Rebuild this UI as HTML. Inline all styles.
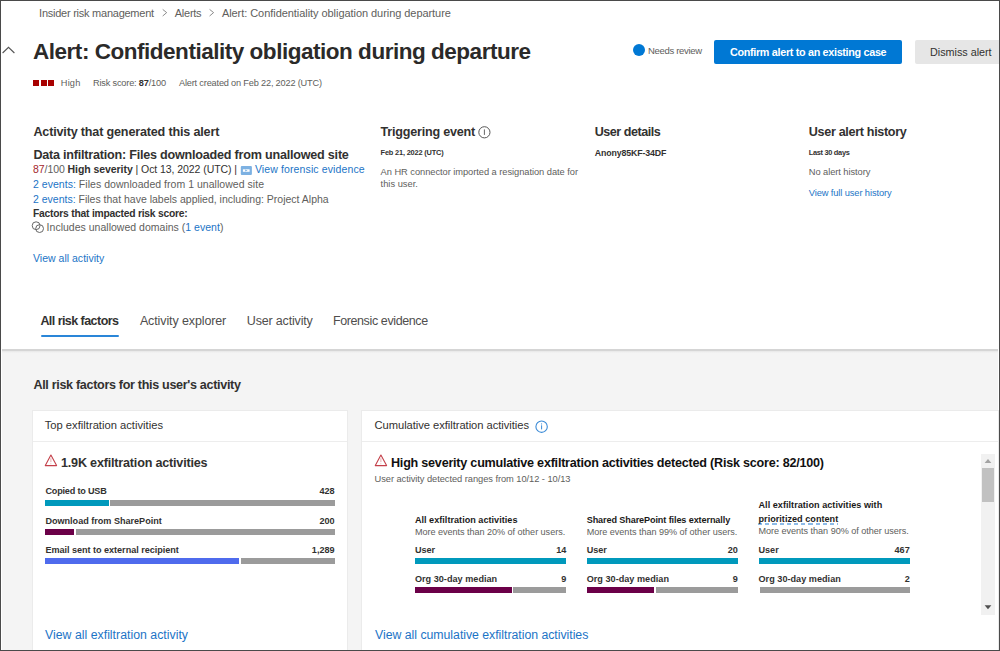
<!DOCTYPE html>
<html><head><meta charset="utf-8"><title>Alert: Confidentiality obligation during departure</title>
<style>
html,body{margin:0;padding:0;}
body{width:1000px;height:651px;position:relative;overflow:hidden;background:#ffffff;font-family:"Liberation Sans",sans-serif;}
.t{position:absolute;white-space:nowrap;}
.t b{font-weight:700;}
.abs{position:absolute;}
.frame{position:absolute;left:0;top:0;width:998px;height:649px;border:1px solid #4a4a4a;}
.graybg{position:absolute;left:2px;top:349px;width:996px;height:301px;background:#f4f4f4;}
.shadow{position:absolute;left:2px;top:349px;width:996px;height:5px;background:linear-gradient(#d5d5d5 0,#d5d5d5 1.5px,#eaeaea 2.5px,#f4f4f4 4px);}
.card{position:absolute;background:#ffffff;box-shadow:0 0 0 1px #ebebeb;}
.hdiv{position:absolute;height:1px;background:#ededed;}
.bar{position:absolute;height:6px;}

</style></head><body>
<div class="graybg"></div>
<div class="shadow"></div>
<!-- up chevron -->
<svg class="abs" style="left:0;top:40px" width="20" height="16"><polyline points="2.6,13 8.5,7.3 14.4,13" fill="none" stroke="#555" stroke-width="1.1"/></svg>
<!-- breadcrumb chevrons -->
<svg class="abs" style="left:158px;top:6px" width="60" height="14"><polyline points="4.7,3.4 8.7,6.6 4.7,10" fill="none" stroke="#808080" stroke-width="0.9"/><polyline points="51.6,3.4 55.6,6.6 51.6,10" fill="none" stroke="#808080" stroke-width="0.9"/></svg>
<!-- severity squares -->
<div class="abs" style="left:33px;top:80px;width:6px;height:6px;background:#a80000"></div>
<div class="abs" style="left:40.5px;top:80px;width:6px;height:6px;background:#a80000"></div>
<div class="abs" style="left:48.2px;top:80px;width:6px;height:6px;background:#a80000"></div>
<!-- needs review dot -->
<div class="abs" style="left:633.3px;top:43.6px;width:12px;height:12px;border-radius:50%;background:#0078d4"></div>
<!-- buttons -->
<div class="abs" style="left:714px;top:40px;width:188px;height:24px;background:#0078d4;border-radius:2px"></div>
<div class="abs" style="left:915px;top:40px;width:84px;height:24px;background:#e6e6e6;border-radius:2px 0 0 2px"></div>
<!-- forensic icon -->
<svg class="abs" style="left:240px;top:165px" width="13" height="11"><rect x="0.8" y="1" width="11.1" height="8.9" rx="1" fill="#7db1e2"/><rect x="2.9" y="4.3" width="6.7" height="2.5" fill="#fff"/><path d="M5.2 4.6 L7.6 5.55 L5.2 6.5Z" fill="#7db1e2"/></svg>
<!-- domain icon -->
<svg class="abs" style="left:30px;top:218.7px" width="16" height="16"><circle cx="6.1" cy="6.7" r="3.9" fill="none" stroke="#666" stroke-width="1"/><circle cx="9.6" cy="9.6" r="3.9" fill="none" stroke="#666" stroke-width="1"/></svg>
<!-- info icon triggering -->
<svg class="abs" style="left:476px;top:124px" width="18" height="18"><circle cx="8.4" cy="8.3" r="5.6" fill="none" stroke="#555" stroke-width="1"/><line x1="8.4" y1="5.4" x2="8.4" y2="10.9" stroke="#555" stroke-width="0.9"/></svg>
<!-- tab underline -->
<div class="abs" style="left:40.8px;top:335px;width:78.2px;height:2px;background:#2a86d8;border-radius:1px"></div>
<!-- cards -->
<div class="card" style="left:33px;top:411px;width:314px;height:240px"></div>
<div class="hdiv" style="left:33px;top:441px;width:314px"></div>
<div class="card" style="left:362px;top:411px;width:636px;height:240px"></div>
<div class="hdiv" style="left:362px;top:441px;width:636px"></div>
<!-- warning icons -->
<svg class="abs" style="left:43px;top:452px" width="16" height="16"><path d="M7.9 3.1 L13.6 13.6 L2.3 13.6 Z" fill="none" stroke="#c4404a" stroke-width="1.1" stroke-linejoin="round"/><line x1="7.9" y1="6.2" x2="7.9" y2="10.2" stroke="#e2a3a6" stroke-width="0.9"/><circle cx="7.9" cy="11.7" r="0.5" fill="#e2a3a6"/></svg>
<svg class="abs" style="left:372.6px;top:452px" width="16" height="16"><path d="M7.9 3.1 L13.6 13.6 L2.3 13.6 Z" fill="none" stroke="#c4404a" stroke-width="1.1" stroke-linejoin="round"/><line x1="7.9" y1="6.2" x2="7.9" y2="10.2" stroke="#e2a3a6" stroke-width="0.9"/><circle cx="7.9" cy="11.7" r="0.5" fill="#e2a3a6"/></svg>
<!-- info icon blue -->
<svg class="abs" style="left:532px;top:417px" width="18" height="18"><circle cx="9.6" cy="9.7" r="5.7" fill="none" stroke="#3a8ad6" stroke-width="1.1"/><line x1="9.6" y1="8.3" x2="9.6" y2="12.4" stroke="#3a8ad6" stroke-width="1"/><circle cx="9.6" cy="6.9" r="0.55" fill="#3a8ad6"/></svg>
<!-- card1 bars -->
<div class="bar" style="left:45.2px;top:500px;width:63.4px;background:#0099bc"></div>
<div class="bar" style="left:110.2px;top:500px;width:224.4px;background:#9b9b9b"></div>
<div class="bar" style="left:45.2px;top:529px;width:28.8px;background:#6b0048"></div>
<div class="bar" style="left:76px;top:529px;width:258.6px;background:#9b9b9b"></div>
<div class="bar" style="left:45.2px;top:558.4px;width:193.8px;background:#4f6bed"></div>
<div class="bar" style="left:240.9px;top:558.4px;width:93.7px;background:#9b9b9b"></div>
<!-- card2 bars -->
<div class="bar" style="left:415px;top:558px;width:151.4px;background:#0099bc"></div>
<div class="bar" style="left:415px;top:587.4px;width:96.6px;background:#6b0048"></div>
<div class="bar" style="left:513px;top:587.4px;width:53.4px;background:#9b9b9b"></div>
<div class="bar" style="left:587px;top:558px;width:150.9px;background:#0099bc"></div>
<div class="bar" style="left:587px;top:587.4px;width:66.8px;background:#6b0048"></div>
<div class="bar" style="left:656px;top:587.4px;width:81.9px;background:#9b9b9b"></div>
<div class="bar" style="left:759px;top:558px;width:150.7px;background:#0099bc"></div>
<div class="bar" style="left:760.3px;top:587.2px;width:149.4px;background:#9b9b9b"></div>
<!-- scrollbar -->
<div class="abs" style="left:981px;top:454px;width:14px;height:161px;background:#f1f1f1"></div>
<div class="abs" style="left:982px;top:468px;width:12px;height:34px;background:#c1c1c1"></div>
<svg class="abs" style="left:981px;top:454px" width="14" height="161"><path d="M3.6 9 L7 5 L10.4 9Z" fill="#a3a3a3"/><path d="M3.6 151.3 L7 155.2 L10.4 151.3Z" fill="#505050"/></svg>
<div class="frame"></div>
<div class="abs" style="left:758.3px;top:523.3px;width:80px;height:1.6px;background:repeating-linear-gradient(90deg,#8dbbe8 0 4.2px,transparent 4.2px 7.2px)"></div>

<div class="t" id="bc1" style="top:7.85px;font-size:11px;line-height:11px;font-weight:400;color:#605e5c;left:39.10px;letter-spacing:-0.248px;">Insider risk management</div>
<div class="t" id="bc2" style="top:7.85px;font-size:11px;line-height:11px;font-weight:400;color:#605e5c;left:174.80px;letter-spacing:-0.265px;">Alerts</div>
<div class="t" id="bc3" style="top:7.85px;font-size:11px;line-height:11px;font-weight:400;color:#605e5c;left:221.90px;letter-spacing:-0.056px;">Alert: Confidentiality obligation during departure</div>
<div class="t" id="title" style="top:40.86px;font-size:22.5px;line-height:22.5px;font-weight:700;color:#2b2a29;left:33.00px;letter-spacing:-0.474px;">Alert: Confidentiality obligation during departure</div>
<div class="t" id="m1" style="top:78.85px;font-size:9.2px;line-height:9.2px;font-weight:400;color:#605e5c;left:60.80px;letter-spacing:0.199px;">High</div>
<div class="t" id="m2" style="top:78.85px;font-size:9.2px;line-height:9.2px;font-weight:400;color:#605e5c;left:93.00px;letter-spacing:-0.183px;">Risk score: <b style="color:#323130">87</b>/100</div>
<div class="t" id="m3" style="top:78.85px;font-size:9.2px;line-height:9.2px;font-weight:400;color:#605e5c;left:179.00px;letter-spacing:-0.180px;">Alert created on Feb 22, 2022 (UTC)</div>
<div class="t" id="nr" style="top:45.85px;font-size:9.5px;line-height:9.5px;font-weight:400;color:#605e5c;left:648.00px;letter-spacing:-0.324px;">Needs review</div>
<div class="t" id="btn1" style="top:46.85px;font-size:10.8px;line-height:10.8px;font-weight:700;color:#ffffff;left:730.00px;letter-spacing:-0.319px;">Confirm alert to an existing case</div>
<div class="t" id="btn2" style="top:46.85px;font-size:10.8px;line-height:10.8px;font-weight:400;color:#323130;left:930.00px;letter-spacing:-0.017px;">Dismiss alert</div>
<div class="t" id="a1" style="top:125.85px;font-size:12.6px;line-height:12.6px;font-weight:700;color:#323130;left:33.40px;letter-spacing:-0.175px;">Activity that generated this alert</div>
<div class="t" id="a2" style="top:148.85px;font-size:12.6px;line-height:12.6px;font-weight:700;color:#323130;left:33.40px;letter-spacing:-0.222px;">Data infiltration: Files downloaded from unallowed site</div>
<div class="t" id="a3" style="top:163.85px;font-size:10.5px;line-height:10.5px;font-weight:400;color:#605e5c;left:33.00px;letter-spacing:-0.067px;"><span style="color:#a4262c">87</span>/100 <b style="color:#323130">High severity</b> <span style="color:#323130">| Oct 13, 2022 (UTC) |</span></div>
<div class="t" id="a3b" style="top:163.85px;font-size:10.5px;line-height:10.5px;font-weight:400;color:#1b74c6;left:254.90px;letter-spacing:0.123px;">View forensic evidence</div>
<div class="t" id="a4" style="top:178.85px;font-size:10.5px;line-height:10.5px;font-weight:400;color:#605e5c;left:33.00px;letter-spacing:0.034px;"><span style="color:#1b74c6">2 events:</span> Files downloaded from 1 unallowed site</div>
<div class="t" id="a5" style="top:193.85px;font-size:10.5px;line-height:10.5px;font-weight:400;color:#605e5c;left:33.00px;letter-spacing:-0.004px;"><span style="color:#1b74c6">2 events:</span> Files that have labels applied, including: Project Alpha</div>
<div class="t" id="a6" style="top:208.86px;font-size:10.3px;line-height:10.3px;font-weight:700;color:#323130;left:33.00px;letter-spacing:-0.224px;">Factors that impacted risk score:</div>
<div class="t" id="a7" style="top:221.85px;font-size:10.5px;line-height:10.5px;font-weight:400;color:#605e5c;left:46.60px;letter-spacing:0.014px;">Includes unallowed domains (<span style="color:#1b74c6">1 event</span>)</div>
<div class="t" id="a8" style="top:252.85px;font-size:10.5px;line-height:10.5px;font-weight:400;color:#1b74c6;left:33.00px;letter-spacing:0.012px;">View all activity</div>
<div class="t" id="tr1" style="top:125.85px;font-size:12.6px;line-height:12.6px;font-weight:700;color:#323130;left:380.60px;letter-spacing:-0.225px;">Triggering event</div>
<div class="t" id="tr2" style="top:148.86px;font-size:7.4px;line-height:7.4px;font-weight:700;color:#323130;left:380.60px;letter-spacing:-0.184px;">Feb 21, 2022 (UTC)</div>
<div class="t" id="tr3" style="top:167.85px;font-size:9.3px;line-height:9.3px;font-weight:400;color:#605e5c;left:380.60px;letter-spacing:-0.045px;">An HR connector imported a resignation date for</div>
<div class="t" id="tr4" style="top:179.85px;font-size:9.3px;line-height:9.3px;font-weight:400;color:#605e5c;left:380.60px;">this user.</div>
<div class="t" id="ud1" style="top:125.85px;font-size:12.6px;line-height:12.6px;font-weight:700;color:#323130;left:594.70px;letter-spacing:-0.492px;">User details</div>
<div class="t" id="ud2" style="top:148.85px;font-size:8.8px;line-height:8.8px;font-weight:700;color:#323130;left:594.70px;letter-spacing:-0.125px;">Anony85KF-34DF</div>
<div class="t" id="uh1" style="top:125.85px;font-size:12.6px;line-height:12.6px;font-weight:700;color:#323130;left:808.80px;letter-spacing:-0.329px;">User alert history</div>
<div class="t" id="uh2" style="top:148.86px;font-size:7.4px;line-height:7.4px;font-weight:700;color:#323130;left:808.80px;letter-spacing:-0.306px;">Last 30 days</div>
<div class="t" id="uh3" style="top:167.85px;font-size:9.3px;line-height:9.3px;font-weight:400;color:#605e5c;left:808.80px;letter-spacing:-0.062px;">No alert history</div>
<div class="t" id="uh4" style="top:188.85px;font-size:9.3px;line-height:9.3px;font-weight:400;color:#1b74c6;left:808.80px;letter-spacing:-0.109px;">View full user history</div>
<div class="t" id="tab1" style="top:314.86px;font-size:12.5px;line-height:12.5px;font-weight:700;color:#323130;left:40.40px;letter-spacing:-0.550px;">All risk factors</div>
<div class="t" id="tab2" style="top:314.86px;font-size:12.5px;line-height:12.5px;font-weight:400;color:#4f4e4d;left:139.90px;letter-spacing:-0.114px;">Activity explorer</div>
<div class="t" id="tab3" style="top:314.86px;font-size:12.5px;line-height:12.5px;font-weight:400;color:#4f4e4d;left:246.80px;letter-spacing:-0.173px;">User activity</div>
<div class="t" id="tab4" style="top:314.86px;font-size:12.5px;line-height:12.5px;font-weight:400;color:#4f4e4d;left:332.90px;letter-spacing:-0.384px;">Forensic evidence</div>
<div class="t" id="g1" style="top:378.85px;font-size:12.6px;line-height:12.6px;font-weight:700;color:#323130;left:33.40px;letter-spacing:-0.327px;">All risk factors for this user's activity</div>
<div class="t" id="c1h" style="top:419.85px;font-size:11.2px;line-height:11.2px;font-weight:400;color:#323130;left:44.70px;letter-spacing:0.006px;">Top exfiltration activities</div>
<div class="t" id="c1t" style="top:456.85px;font-size:12.6px;line-height:12.6px;font-weight:700;color:#323130;left:61.00px;letter-spacing:-0.196px;">1.9K exfiltration activities</div>
<div class="t" id="c1l428" style="top:486.85px;font-size:9.1px;line-height:9.1px;font-weight:700;color:#323130;left:45.40px;letter-spacing:-0.189px;">Copied to USB</div>
<div class="t" id="c1v428" style="top:486.85px;font-size:9.1px;line-height:9.1px;font-weight:700;color:#323130;right:665.40px;">428</div>
<div class="t" id="c1l200" style="top:516.85px;font-size:9.1px;line-height:9.1px;font-weight:700;color:#323130;left:45.40px;letter-spacing:-0.014px;">Download from SharePoint</div>
<div class="t" id="c1v200" style="top:516.85px;font-size:9.1px;line-height:9.1px;font-weight:700;color:#323130;right:665.40px;">200</div>
<div class="t" id="c1l1,289" style="top:545.85px;font-size:9.1px;line-height:9.1px;font-weight:700;color:#323130;left:45.40px;letter-spacing:-0.033px;">Email sent to external recipient</div>
<div class="t" id="c1v1,289" style="top:545.85px;font-size:9.1px;line-height:9.1px;font-weight:700;color:#323130;right:665.40px;">1,289</div>
<div class="t" id="c1link" style="top:628.86px;font-size:12.3px;line-height:12.3px;font-weight:400;color:#1b74c6;left:45.00px;letter-spacing:0.013px;">View all exfiltration activity</div>
<div class="t" id="c2h" style="top:419.85px;font-size:11.2px;line-height:11.2px;font-weight:400;color:#323130;left:374.50px;letter-spacing:-0.048px;">Cumulative exfiltration activities</div>
<div class="t" id="c2t" style="top:456.85px;font-size:12.6px;line-height:12.6px;font-weight:700;color:#111111;left:391.00px;letter-spacing:-0.231px;">High severity cumulative exfiltration activities detected (Risk score: 82/100)</div>
<div class="t" id="c2s" style="top:474.85px;font-size:9.3px;line-height:9.3px;font-weight:400;color:#605e5c;left:374.50px;letter-spacing:-0.052px;">User activity detected ranges from 10/12 - 10/13</div>
<div class="t" id="mh00" style="top:515.85px;font-size:9.1px;line-height:9.1px;font-weight:700;color:#1b1a19;left:414.90px;letter-spacing:0.019px;">All exfiltration activities</div>
<div class="t" id="ms0" style="top:527.85px;font-size:9.1px;line-height:9.1px;font-weight:400;color:#605e5c;left:414.90px;letter-spacing:-0.039px;">More events than 20% of other users.</div>
<div class="t" id="mu0" style="top:545.85px;font-size:9.1px;line-height:9.1px;font-weight:700;color:#323130;left:414.90px;">User</div>
<div class="t" id="muv0" style="top:545.85px;font-size:9.1px;line-height:9.1px;font-weight:700;color:#323130;right:433.60px;">14</div>
<div class="t" id="mo0" style="top:574.85px;font-size:9.1px;line-height:9.1px;font-weight:700;color:#323130;left:414.90px;letter-spacing:0.026px;">Org 30-day median</div>
<div class="t" id="mov0" style="top:574.85px;font-size:9.1px;line-height:9.1px;font-weight:700;color:#323130;right:433.60px;">9</div>
<div class="t" id="mh10" style="top:515.85px;font-size:9.1px;line-height:9.1px;font-weight:700;color:#1b1a19;left:586.70px;letter-spacing:-0.108px;">Shared SharePoint files externally</div>
<div class="t" id="ms1" style="top:527.85px;font-size:9.1px;line-height:9.1px;font-weight:400;color:#605e5c;left:586.70px;letter-spacing:-0.030px;">More events than 99% of other users.</div>
<div class="t" id="mu1" style="top:545.85px;font-size:9.1px;line-height:9.1px;font-weight:700;color:#323130;left:586.70px;">User</div>
<div class="t" id="muv1" style="top:545.85px;font-size:9.1px;line-height:9.1px;font-weight:700;color:#323130;right:262.10px;">20</div>
<div class="t" id="mo1" style="top:574.85px;font-size:9.1px;line-height:9.1px;font-weight:700;color:#323130;left:586.70px;letter-spacing:0.026px;">Org 30-day median</div>
<div class="t" id="mov1" style="top:574.85px;font-size:9.1px;line-height:9.1px;font-weight:700;color:#323130;right:262.10px;">9</div>
<div class="t" id="mh20" style="top:500.85px;font-size:9.1px;line-height:9.1px;font-weight:700;color:#1b1a19;left:758.50px;letter-spacing:0.029px;">All exfiltration activities with</div>
<div class="t" id="mh21" style="top:514.85px;font-size:9.1px;line-height:9.1px;font-weight:700;color:#1b1a19;left:758.50px;letter-spacing:0.021px;">prioritized content</div>
<div class="t" id="ms2" style="top:526.85px;font-size:9.1px;line-height:9.1px;font-weight:400;color:#605e5c;left:758.50px;letter-spacing:-0.039px;">More events than 90% of other users.</div>
<div class="t" id="mu2" style="top:545.85px;font-size:9.1px;line-height:9.1px;font-weight:700;color:#323130;left:758.50px;">User</div>
<div class="t" id="muv2" style="top:545.85px;font-size:9.1px;line-height:9.1px;font-weight:700;color:#323130;right:90.30px;">467</div>
<div class="t" id="mo2" style="top:574.85px;font-size:9.1px;line-height:9.1px;font-weight:700;color:#323130;left:758.50px;letter-spacing:0.026px;">Org 30-day median</div>
<div class="t" id="mov2" style="top:574.85px;font-size:9.1px;line-height:9.1px;font-weight:700;color:#323130;right:90.30px;">2</div>
<div class="t" id="c2link" style="top:628.86px;font-size:12.3px;line-height:12.3px;font-weight:400;color:#1b74c6;left:375.10px;letter-spacing:-0.028px;">View all cumulative exfiltration activities</div>
</body></html>
